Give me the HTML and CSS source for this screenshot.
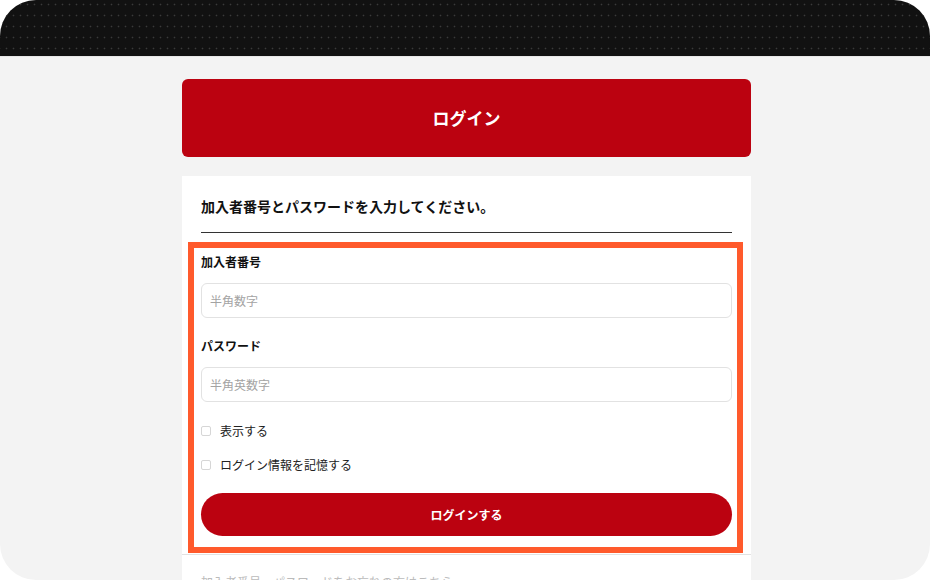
FILE: index.html
```html
<!DOCTYPE html>
<html lang="ja">
<head>
<meta charset="utf-8">
<title>ログイン</title>
<link rel="stylesheet" href="styles.css">
</head>
<body>
<div class="frame">
  <div class="topbar"></div>
  <main class="main">
    <div class="header">ログイン</div>
    <section class="card">
      <div class="card-body">
        <p class="lead">加入者番号とパスワードを入力してください。</p>
        <form class="form">
          <label class="label" for="num">加入者番号</label>
          <input class="input" id="num" type="text" placeholder="半角数字">
          <label class="label label-2" for="pw">パスワード</label>
          <input class="input" id="pw" type="password" placeholder="半角英数字">
          <label class="check check-1"><input type="checkbox" class="cb"><span>表示する</span></label>
          <label class="check check-2"><input type="checkbox" class="cb"><span>ログイン情報を記憶する</span></label>
          <button type="button" class="submit">ログインする</button>
        </form>
      </div>
      <div class="card-foot">加入者番号・パスワードをお忘れの方はこちら</div>
    </section>
  </main>
</div>
</body>
</html>
```

FILE: styles.css
```css
* { box-sizing: border-box; }
html, body { margin: 0; padding: 0; background: #ffffff; }
body {
  font-family: "Noto Sans CJK JP", "Noto Sans", sans-serif;
  color: #111;
}
.frame {
  width: 930px;
  height: 580px;
  border-radius: 36px;
  overflow: hidden;
  background: #f3f3f3;
}
.topbar {
  height: 57px;
  background-color: #111111;
  background-image: radial-gradient(circle, #3a3a3a 0.7px, transparent 1.1px);
  background-size: 7px 11px;
  background-position: 3px 10px;
  border-bottom: 1px solid #e6e6e6;
}
.main {
  width: 569px;
  margin-left: 182px;
  padding-top: 22px;
}
.header {
  height: 78px;
  border-radius: 6px;
  background: #bb0210;
  color: #fff;
  font-size: 17px;
  font-weight: 700;
  display: flex;
  align-items: center;
  justify-content: center;
  padding-bottom: 1px;
}
.card {
  margin-top: 19px;
  background: #fff;
}
.card-body {
  padding: 0 19px;
}
.lead {
  margin: 0;
  padding: 20px 0 16px;
  font-size: 14px;
  line-height: 20px;
  font-weight: 700;
  border-bottom: 1px solid #333;
}
.form {
  margin: 9px -11px 0 -13px;
  border: 6px solid #ff5a2c;
  padding: 5px 5px 11px 7px;
  display: flex;
  flex-direction: column;
}
.label {
  font-size: 12px;
  line-height: 18px;
  font-weight: 700;
}
.label-2 { margin-top: 19px; }
.input {
  margin-top: 12px;
  height: 35px;
  width: 100%;
  border: 1px solid #e2e2e2;
  border-radius: 6px;
  padding: 0 8px;
  font-family: inherit;
  font-size: 12px;
  color: #111;
  background: #fff;
  outline: none;
}
.input::placeholder { color: #a3a3a3; }
.check {
  display: flex;
  align-items: center;
  gap: 9px;
  font-size: 12px;
  line-height: 18px;
  color: #222;
}
.check-1 { margin-top: 20px; }
.check-2 { margin-top: 16px; }
.cb {
  appearance: none;
  -webkit-appearance: none;
  margin: 0;
  width: 10px;
  height: 10px;
  border: 1px solid #d6d6d6;
  border-radius: 2px;
  background: #fff;
}
.submit {
  margin-top: 19px;
  height: 43px;
  width: 100%;
  border: none;
  border-radius: 22px;
  background: #bb0210;
  color: #fff;
  font-family: inherit;
  font-size: 12px;
  font-weight: 700;
}
.card-foot {
  margin-top: 1px;
  border-top: 1px solid #e2e2e2;
  padding: 18px 19px 10px;
  font-size: 12px;
  line-height: 18px;
  color: #bbb;
}
```
